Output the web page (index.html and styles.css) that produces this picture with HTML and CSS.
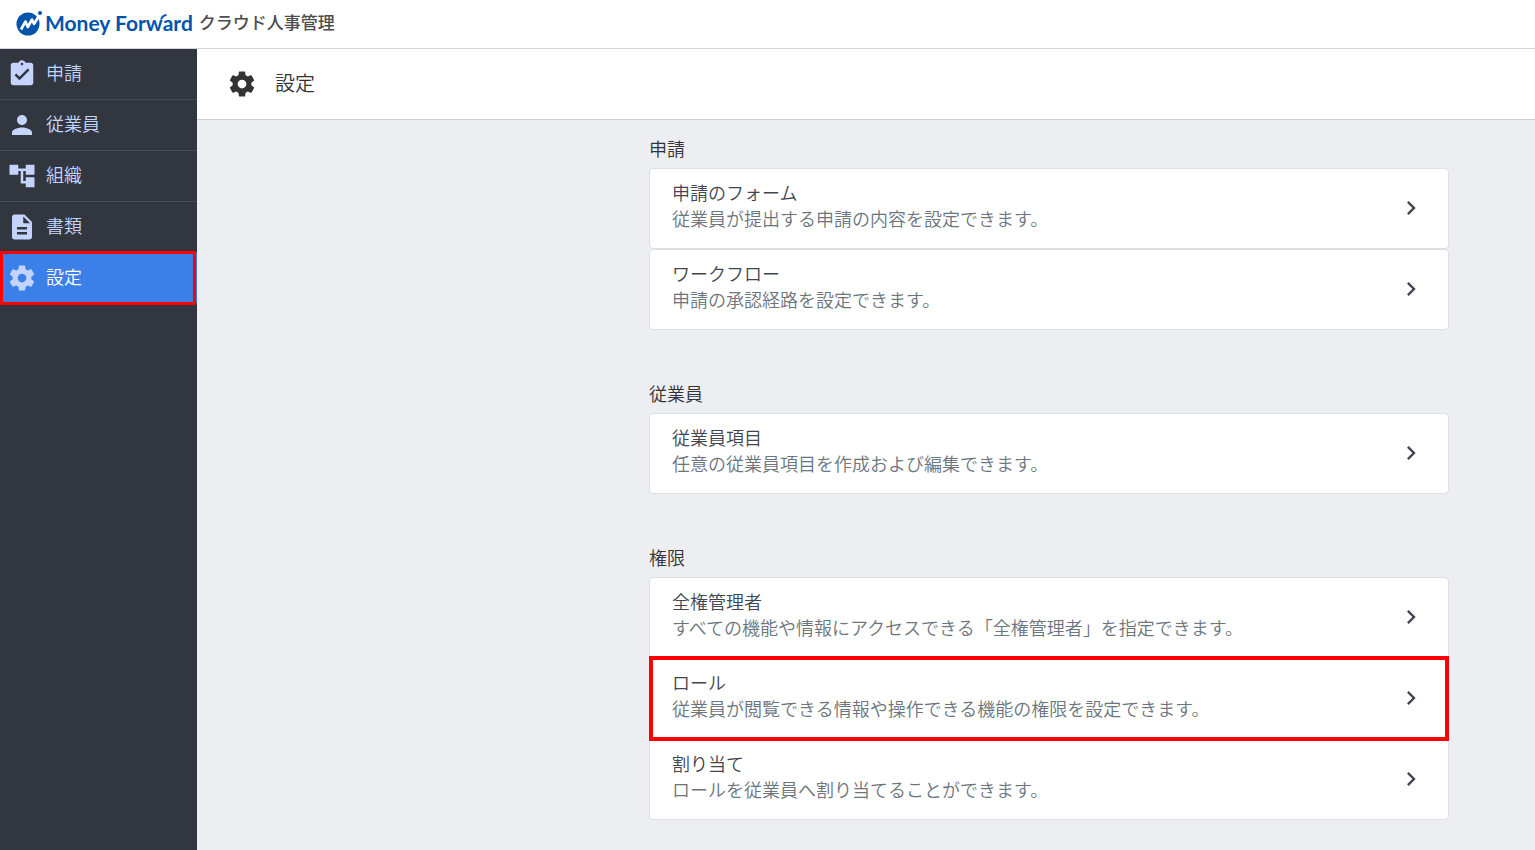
FILE: index.html
```html
<!DOCTYPE html>
<html lang="ja">
<head>
<meta charset="utf-8">
<title>設定 - クラウド人事管理</title>
<link rel="stylesheet" href="styles.css">
</head>
<body>
<header class="topbar">
  <a class="brand" href="#">
    <svg class="brand-mark" viewBox="0 0 26 26" aria-hidden="true">
      <circle cx="12" cy="14" r="11.500" fill="#0054ac"/>
      <path d="M5 19.500L9.500 11.500L11.800 17L16 9.500L18 14L22.500 6.500" fill="none" stroke="#fff" stroke-width="2.600" stroke-linejoin="round"/>
      <circle cx="23.800" cy="3.500" r="3.500" fill="#fff"/>
      <circle cx="24" cy="3" r="2" fill="#0054ac"/>
    </svg>
    <span class="brand-name">Money For<span class="brand-w">w<svg class="brand-tail" viewBox="0 0 7 6" aria-hidden="true"><path d="M1 5.500C2 3 3.500 1.300 6.500 1" fill="none" stroke="#0054ac" stroke-width="2"/></svg></span>ard</span>
    <span class="brand-product">クラウド人事管理</span>
  </a>
</header>
<div class="layout">
  <nav class="sidebar">
    <a class="nav-item" href="#">
      <svg class="nav-icon" viewBox="0 0 24 24" aria-hidden="true"><path d="M19 3h-4.180C14.400 1.840 13.300 1 12 1c-1.300 0-2.400.84-2.820 2H5c-1.100 0-2 .9-2 2v14c0 1.100.9 2 2 2h14c1.100 0 2-.9 2-2V5c0-1.100-.9-2-2-2zm-7 0c.55 0 1 .45 1 1s-.45 1-1 1-1-.45-1-1 .45-1 1-1zm-2 14l-4-4 1.410-1.410L10 14.170l6.590-6.590L18 9l-8 8z"/></svg>
      <span class="nav-label">申請</span>
    </a>
    <a class="nav-item" href="#">
      <svg class="nav-icon" viewBox="0 0 24 24" aria-hidden="true"><path d="M12 12c2.210 0 4-1.790 4-4s-1.790-4-4-4-4 1.790-4 4 1.790 4 4 4zm0 2c-2.670 0-8 1.340-8 4v2h16v-2c0-2.660-5.330-4-8-4z"/></svg>
      <span class="nav-label">従業員</span>
    </a>
    <a class="nav-item" href="#">
      <svg class="nav-icon" viewBox="0 0 24 24" aria-hidden="true"><path d="M22 11V3h-7v3H9V3H2v8h7V8h2v10h4v3h7v-8h-7v3h-2V8h2v3z"/></svg>
      <span class="nav-label">組織</span>
    </a>
    <a class="nav-item" href="#">
      <svg class="nav-icon" viewBox="0 0 24 24" aria-hidden="true"><path d="M14 2H6c-1.100 0-1.990.9-1.990 2L4 20c0 1.100.89 2 1.990 2H18c1.100 0 2-.9 2-2V8l-6-6zm2 16H8v-2h8v2zm0-4H8v-2h8v2zm-3-5V3.500L18.500 9H13z"/></svg>
      <span class="nav-label">書類</span>
    </a>
    <a class="nav-item nav-item-active" href="#" aria-current="page">
      <svg class="nav-icon" viewBox="0 0 24 24" aria-hidden="true"><path d="M19.430 12.980c.04-.32.07-.64.07-.98s-.03-.66-.07-.98l2.110-1.650c.19-.15.24-.42.12-.64l-2-3.460c-.12-.22-.39-.3-.61-.22l-2.490 1c-.52-.4-1.080-.73-1.690-.98l-.38-2.650C14.460 2.180 14.250 2 14 2h-4c-.25 0-.46.18-.49.42l-.38 2.650c-.61.25-1.170.59-1.690.98l-2.490-1c-.23-.09-.49 0-.61.22l-2 3.460c-.13.22-.07.49.12.64l2.110 1.650c-.04.32-.07.65-.07.98s.03.66.07.98l-2.110 1.650c-.19.15-.24.42-.12.64l2 3.460c.12.22.39.3.61.22l2.490-1c.52.4 1.080.73 1.690.98l.38 2.650c.03.24.24.42.49.42h4c.25 0 .46-.18.49-.42l.38-2.650c.61-.25 1.170-.59 1.690-.98l2.490 1c.23.09.49 0 .61-.22l2-3.460c.12-.22.07-.49-.12-.64l-2.110-1.650zM12 15.500c-1.930 0-3.500-1.570-3.500-3.500s1.570-3.500 3.500-3.500 3.500 1.570 3.500 3.500-1.570 3.500-3.500 3.500z"/></svg>
      <span class="nav-label">設定</span>
    </a>
  </nav>
  <main class="main">
    <div class="page-head">
      <svg class="page-icon" viewBox="0 0 24 24" aria-hidden="true"><path d="M19.430 12.980c.04-.32.07-.64.07-.98s-.03-.66-.07-.98l2.110-1.650c.19-.15.24-.42.12-.64l-2-3.460c-.12-.22-.39-.3-.61-.22l-2.490 1c-.52-.4-1.080-.73-1.690-.98l-.38-2.650C14.460 2.180 14.250 2 14 2h-4c-.25 0-.46.18-.49.42l-.38 2.650c-.61.25-1.170.59-1.690.98l-2.490-1c-.23-.09-.49 0-.61.22l-2 3.460c-.13.22-.07.49.12.64l2.110 1.650c-.04.32-.07.65-.07.98s.03.66.07.98l-2.110 1.650c-.19.15-.24.42-.12.64l2 3.460c.12.22.39.3.61.22l2.490-1c.52.4 1.080.73 1.690.98l.38 2.650c.03.24.24.42.49.42h4c.25 0 .46-.18.49-.42l.38-2.650c.61-.25 1.170-.59 1.690-.98l2.490 1c.23.09.49 0 .61-.22l2-3.460c.12-.22.07-.49-.12-.64l-2.110-1.650zM12 15.500c-1.930 0-3.500-1.570-3.500-3.500s1.570-3.500 3.500-3.500 3.500 1.570 3.500 3.500-1.570 3.500-3.500 3.500z"/></svg>
      <h1 class="page-title">設定</h1>
    </div>
    <div class="content">
      <section class="group">
        <h2 class="group-title">申請</h2>
        <a class="card" href="#">
          <span class="card-text"><span class="card-title">申請のフォーム</span><span class="card-desc">従業員が提出する申請の内容を設定できます。</span></span>
          <svg class="chevron" viewBox="0 0 24 24" aria-hidden="true"><path d="M10 6L8.590 7.410 13.170 12l-4.580 4.590L10 18l6-6z"/></svg>
        </a>
        <a class="card" href="#">
          <span class="card-text"><span class="card-title">ワークフロー</span><span class="card-desc">申請の承認経路を設定できます。</span></span>
          <svg class="chevron" viewBox="0 0 24 24" aria-hidden="true"><path d="M10 6L8.590 7.410 13.170 12l-4.580 4.590L10 18l6-6z"/></svg>
        </a>
      </section>
      <section class="group">
        <h2 class="group-title">従業員</h2>
        <a class="card" href="#">
          <span class="card-text"><span class="card-title">従業員項目</span><span class="card-desc">任意の従業員項目を作成および編集できます。</span></span>
          <svg class="chevron" viewBox="0 0 24 24" aria-hidden="true"><path d="M10 6L8.590 7.410 13.170 12l-4.580 4.590L10 18l6-6z"/></svg>
        </a>
      </section>
      <section class="group">
        <h2 class="group-title">権限</h2>
        <a class="card" href="#">
          <span class="card-text"><span class="card-title">全権管理者</span><span class="card-desc">すべての機能や情報にアクセスできる「全権管理者」を指定できます。</span></span>
          <svg class="chevron" viewBox="0 0 24 24" aria-hidden="true"><path d="M10 6L8.590 7.410 13.170 12l-4.580 4.590L10 18l6-6z"/></svg>
        </a>
        <a class="card card-marked" href="#">
          <span class="card-text"><span class="card-title">ロール</span><span class="card-desc">従業員が閲覧できる情報や操作できる機能の権限を設定できます。</span></span>
          <svg class="chevron" viewBox="0 0 24 24" aria-hidden="true"><path d="M10 6L8.590 7.410 13.170 12l-4.580 4.590L10 18l6-6z"/></svg>
        </a>
        <a class="card" href="#">
          <span class="card-text"><span class="card-title">割り当て</span><span class="card-desc">ロールを従業員へ割り当てることができます。</span></span>
          <svg class="chevron" viewBox="0 0 24 24" aria-hidden="true"><path d="M10 6L8.590 7.410 13.170 12l-4.580 4.590L10 18l6-6z"/></svg>
        </a>
      </section>
    </div>
  </main>
</div>
</body>
</html>
```
FILE: styles.css
```css
* { box-sizing: border-box; }
body {
  margin: 0;
  min-height: 100vh;
  display: flex;
  flex-direction: column;
  background: #edeef2;
  color: #333;
  font-family: "Noto Sans CJK JP", sans-serif;
  font-weight: 350;
  font-size: 18px;
  line-height: 26px;
}
a { color: inherit; text-decoration: none; }
h1, h2 { margin: 0; font-weight: inherit; }
svg { display: block; flex: none; fill: currentColor; }

.topbar {
  background: #fff;
  border-bottom: 1px solid #d3d5da;
  padding: 10px 16px 12px;
}
.brand { display: flex; align-items: center; width: max-content; }
.brand-mark { width: 26px; height: 26px; margin-right: 3px; }
.brand-name {
  margin-right: 6px;
  color: #0054ac;
  font-family: Lato, sans-serif;
  font-weight: 700;
  font-size: 21px;
}
.brand-w { position: relative; }
.brand-tail { position: absolute; right: -4px; top: 4px; width: 7px; height: 6px; }
.brand-product { padding-bottom: 2px; line-height: 24px; color: #4d4d4d; font-size: 17px; font-weight: 500; }

.layout { flex: 1; display: flex; }
.sidebar { width: 197px; flex: none; background: #32363f; color: #c5d3ff; }
.nav-item {
  display: flex;
  align-items: center;
  gap: 9px;
  padding: 10px 7px;
  border-bottom: 1px solid #474b57;
}
.nav-icon { width: 30px; height: 30px; }
.nav-label { padding-bottom: 4px; }
.nav-item-active {
  position: relative;
  background: #3b7fe9;
  border-bottom: 0;
}
.nav-item-active .nav-label { color: #fff; }
.nav-item-active::after {
  content: "";
  position: absolute;
  inset: -2px 1px -2px 0;
  border: 3px solid #f00;
}

.main { flex: 1; min-width: 0; }
.page-head {
  display: flex;
  align-items: center;
  gap: 18px;
  padding: 20px 30px;
  background: #fff;
  border-bottom: 1px solid #d0d1d5;
}
.page-icon { width: 30px; height: 30px; }
.page-title { padding-bottom: 2px; font-size: 20px; }

.content { max-width: 800px; margin: 0 86px 0 auto; padding: 15px 0 31px; }
.group + .group { margin-top: 50px; }
.group-title { font-size: 18px; margin-bottom: 7px; }
.card {
  display: flex;
  align-items: center;
  justify-content: space-between;
  padding: 12px 23px 13px 22px;
  background: #fff;
  border: 1px solid #dedfe1;
  border-radius: 4px;
}
.card-marked { position: relative; }
.card-marked::after {
  content: "";
  position: absolute;
  inset: -3px -1px;
  border: 4px solid #f00;
}
.card-text { display: flex; flex-direction: column; padding-bottom: 4px; margin-top: -2px; }
.card-title { color: #404550; }
.card-desc { color: #6c757d; }
.chevron { width: 28px; height: 28px; color: #404550; }
```
